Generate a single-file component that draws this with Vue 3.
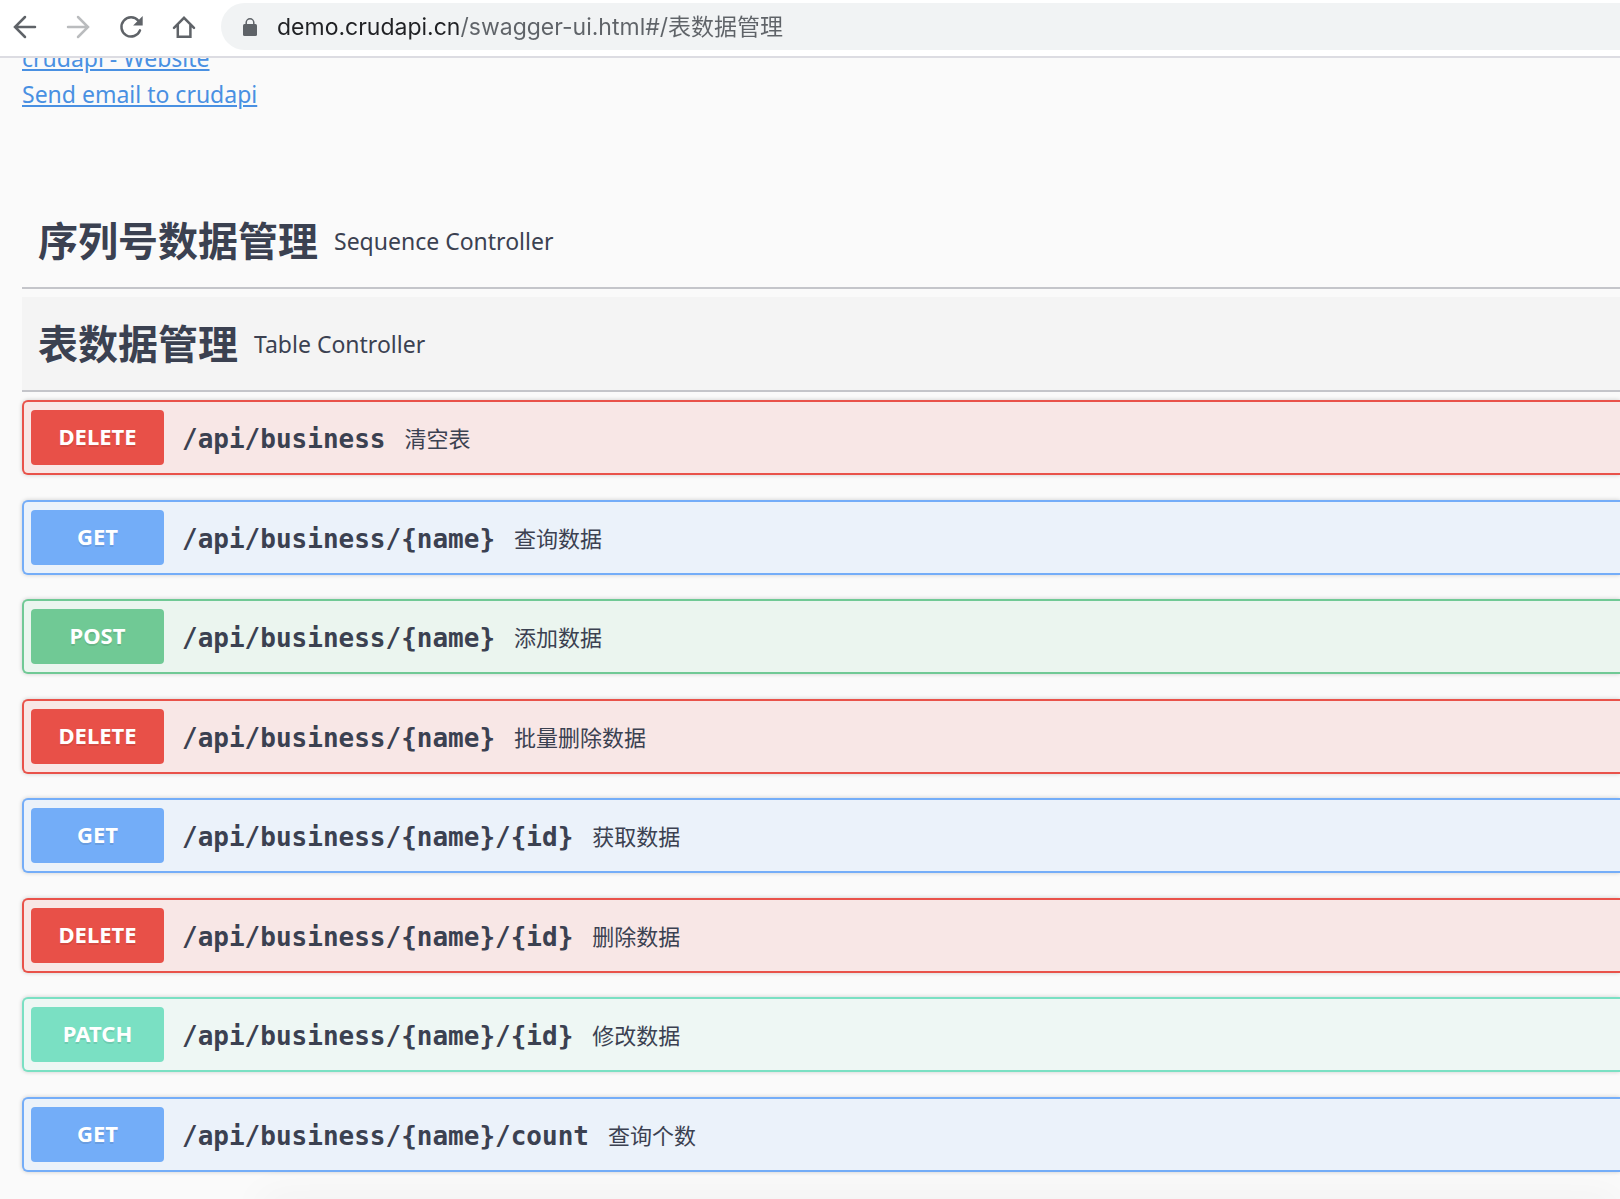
<script setup>
import { ref } from "vue";

const address = ref("demo.crudapi.cn/swagger-ui.html#/表数据管理");

const tags = [
  { name: "序列号数据管理", description: "Sequence Controller", open: false },
  { name: "表数据管理", description: "Table Controller", open: true },
];

const operations = [
  { method: "DELETE", path: "/api/business", summary: "清空表" },
  { method: "GET", path: "/api/business/{name}", summary: "查询数据" },
  { method: "POST", path: "/api/business/{name}", summary: "添加数据" },
  { method: "DELETE", path: "/api/business/{name}", summary: "批量删除数据" },
  { method: "GET", path: "/api/business/{name}/{id}", summary: "获取数据" },
  { method: "DELETE", path: "/api/business/{name}/{id}", summary: "删除数据" },
  { method: "PATCH", path: "/api/business/{name}/{id}", summary: "修改数据" },
  { method: "GET", path: "/api/business/{name}/count", summary: "查询个数" },
];
</script>

<template>
  <div class="browser">
    <header class="toolbar">
      <nav class="nav">
        <button type="button" class="nav-btn" aria-label="Back">
          <svg viewBox="0 0 32 32">
            <path d="M26 16H7M16 6L6 16l10 10" />
          </svg>
        </button>
        <button type="button" class="nav-btn disabled" aria-label="Forward" disabled>
          <svg viewBox="0 0 32 32">
            <path d="M6 16h19M16 6l10 10-10 10" />
          </svg>
        </button>
        <button type="button" class="nav-btn" aria-label="Reload">
          <svg viewBox="0 0 32 32">
            <path d="M25 19.4A9.6 9.6 0 1 1 23.4 9.8" />
            <path class="solid" d="M27.7 5v9.6h-9.6z" />
          </svg>
        </button>
        <button type="button" class="nav-btn" aria-label="Home">
          <svg viewBox="0 0 32 32">
            <path d="M6 16.8L16 6.8l10 10M9.8 14v11.8h12.6V14" />
          </svg>
        </button>
      </nav>
      <label class="omnibox">
        <svg class="lock" viewBox="0 0 14 18">
          <rect x="0" y="6" width="14" height="12" rx="1.5" fill="#5f6368" />
          <path d="M3.2 7V4.6a3.8 3.8 0 0 1 7.6 0V7" fill="none" stroke="#5f6368" stroke-width="1.5" />
        </svg>
        <input v-model="address" class="address" type="text" aria-label="Address" />
      </label>
    </header>

    <main class="page">
      <div class="contact">
        <a href="#website">crudapi - Website</a>
        <a href="#email">Send email to crudapi</a>
      </div>

      <h3 v-for="tag in tags" :key="tag.name" class="tag" :class="{ open: tag.open }">
        <span>{{ tag.name }}</span>
        <small>{{ tag.description }}</small>
      </h3>

      <div class="operations">
        <div
          v-for="op in operations"
          :key="op.method + op.path"
          class="opblock"
          :class="op.method.toLowerCase()"
        >
          <button type="button" class="method">{{ op.method }}</button>
          <span class="path">{{ op.path }}</span>
          <span class="summary">{{ op.summary }}</span>
        </div>
      </div>
    </main>
  </div>
</template>

<style>
body {
  margin: 0;
  background: #fafafa;
}
</style>

<style scoped>
.browser {
  position: relative;
  min-height: 100vh;
  overflow: hidden;
  color: #3b4151;
  font-family: "Noto Sans", "Noto Sans CJK SC", sans-serif;
}

/* shadow rising from the bottom edge of the window */
.browser::after {
  content: "";
  position: absolute;
  right: 0;
  bottom: -20px;
  left: 260px;
  height: 20px;
  box-shadow: 0 0 40px rgba(0, 0, 0, 0.06);
  pointer-events: none;
}

.toolbar {
  position: relative;
  display: flex;
  align-items: center;
  gap: 21px;
  padding: 3px 0 6px 9px;
  background: #fff;
  border-bottom: 2px solid #dcdce2;
}

.nav {
  display: flex;
  gap: 21px;
}

.nav-btn {
  width: 32px;
  height: 32px;
  padding: 0;
  border: 0;
  background: none;
  color: #5f6368;
}

.nav-btn.disabled {
  color: #babcbe;
}

.nav-btn svg {
  display: block;
  width: 32px;
  height: 32px;
  fill: none;
  stroke: currentColor;
  stroke-width: 2.5;
  stroke-linecap: round;
}

.nav-btn .solid {
  fill: currentColor;
  stroke: none;
}

.omnibox {
  display: flex;
  flex: 1;
  align-items: center;
  gap: 20px;
  height: 47px;
  padding-left: 22px;
  background: #f1f3f4;
  border-radius: 24px 0 0 24px;
}

.lock {
  width: 14px;
  height: 18px;
}

/* host part dark, the rest of the address grey */
.address {
  flex: 1;
  padding: 0;
  border: 0;
  outline: 0;
  background: linear-gradient(90deg, #202124 184px, #5f6368 184px);
  background-clip: text;
  -webkit-text-fill-color: transparent;
  font: 23px/32px Inter, "Noto Sans CJK SC", sans-serif;
}

.page {
  padding-left: 22px;
}

.contact {
  display: flex;
  flex-direction: column;
  align-items: flex-start;
  margin-top: -18px;
  margin-bottom: 82px;
}

.contact a {
  color: #4990e2;
  font-size: 23px;
  line-height: 36px;
}

.tag {
  display: flex;
  align-items: center;
  gap: 16px;
  height: 89px;
  margin: 0 0 8px;
  padding: 0 0 4px 16px;
  border-bottom: 2px solid #c4c5ca;
  font-size: 40px;
  font-weight: 700;
}

.tag.open {
  background: #f4f4f4;
}

.tag small {
  padding-top: 4px;
  font-size: 23px;
  font-weight: 400;
}

.opblock {
  display: flex;
  align-items: center;
  margin-bottom: 25px;
  padding: 8px 8px 8px 7px;
  border: 2px solid;
  border-right: 0;
  border-radius: 6px 0 0 6px;
  box-shadow: 0 0 4px rgba(0, 0, 0, 0.19);
}

.opblock:nth-child(even) {
  margin-bottom: 24px;
}

.method {
  width: 133px;
  height: 55px;
  padding: 0 0 3px;
  border: 0;
  border-radius: 4px;
  color: #fff;
  font: 700 22px/32px "Noto Sans", sans-serif;
  text-shadow: 0 2px 0 rgba(0, 0, 0, 0.1);
}

.path {
  padding: 2px 19px 0 18px;
  font: 600 26px/36px "DejaVu Sans Mono", monospace;
}

.summary {
  font-size: 22px;
  line-height: 32px;
}

.delete {
  background: #f8e7e6;
  border-color: #e9524a;
}

.delete .method {
  background: #e85048;
}

.get {
  background: #ebf2fa;
  border-color: #74adf8;
}

.get .method {
  background: #73adf8;
}

.post {
  background: #ebf5ef;
  border-color: #70c995;
}

.post .method {
  background: #70c995;
}

.patch {
  background: #eef7f4;
  border-color: #7ae0c3;
}

.patch .method {
  background: #7ae0c3;
}
</style>
